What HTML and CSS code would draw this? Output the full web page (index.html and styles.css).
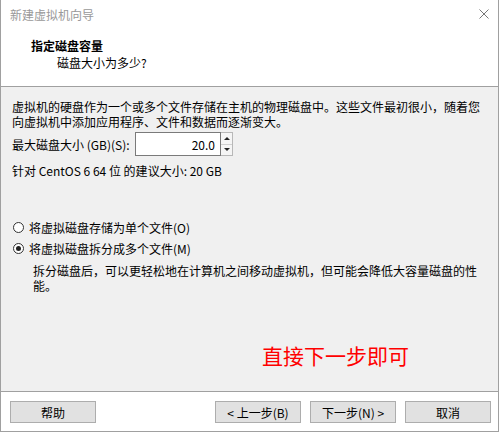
FILE: index.html
```html
<!DOCTYPE html>
<html lang="zh-CN">
<head>
    <meta charset="UTF-8">
    <meta name="viewport" content="width=device-width, initial-scale=1.0">
    <title>新建虚拟机向导</title>
    <link rel="stylesheet" href="styles.css">
</head>
<body>
    <div class="window">
        <div class="titlebar">
            <span>新建虚拟机向导</span>
            <svg class="close" width="10" height="10" viewBox="0 0 10 10">
                <path d="M0.5 0.5 L9.5 9.5 M9.5 0.5 L0.5 9.5" stroke="#777" stroke-width="1" fill="none"/>
            </svg>
        </div>

        <div class="header">
            <div class="header-title">指定磁盘容量</div>
            <div class="header-sub">磁盘大小为多少?</div>
        </div>

        <div class="content">
            <p class="intro">虚拟机的硬盘作为一个或多个文件存储在主机的物理磁盘中。这些文件最初很小，随着您向虚拟机中添加应用程序、文件和数据而逐渐变大。</p>

            <div class="size-row">
                <label for="diskSize">最大磁盘大小 (GB)(S):</label>
                <div class="spin">
                    <input type="text" id="diskSize" value="20.0">
                    <div class="spin-buttons">
                        <span class="spin-up"></span>
                        <span class="spin-down"></span>
                    </div>
                </div>
            </div>

            <p class="hint">针对 CentOS 6 64 位 的建议大小: 20 GB</p>

            <div class="options">
                <label class="radio">
                    <input type="radio" name="split">
                    <span class="dot"></span>
                    将虚拟磁盘存储为单个文件(O)
                </label>
                <label class="radio">
                    <input type="radio" name="split" checked>
                    <span class="dot"></span>
                    将虚拟磁盘拆分成多个文件(M)
                </label>
                <p class="note">拆分磁盘后，可以更轻松地在计算机之间移动虚拟机，但可能会降低大容量磁盘的性能。</p>
            </div>

            <p class="tip">直接下一步即可</p>
        </div>

        <div class="footer">
            <button class="help">帮助</button>
            <button>&lt; 上一步(B)</button>
            <button>下一步(N) &gt;</button>
            <button>取消</button>
        </div>
    </div>
</body>
</html>
```

FILE: styles.css
```css
body {
    margin: 0;
    background: #fff;
    font-family: "Noto Sans CJK SC", sans-serif;
    font-size: 12px;
    color: #000;
}

p {
    margin: 0;
}

.window {
    width: 499px;
    height: 432px;
    box-sizing: border-box;
    border: 1px solid #a0a0a0;
    border-top: none;
    display: flex;
    flex-direction: column;
}

.titlebar {
    height: 28px;
    display: flex;
    align-items: center;
    padding: 0 9px 0 9px;
    color: #999;
}

.titlebar .close {
    margin-left: auto;
}

.header {
    height: 59px;
    box-sizing: border-box;
    border-bottom: 1px solid #a0a0a0;
    padding: 10px 0 0 30px;
    line-height: 16px;
}

.header-title {
    font-weight: bold;
}

.header-sub {
    margin: 1px 0 0 26px;
}

.content {
    flex: 1;
    background: #f0f0f0;
    padding: 12px 12px 0 11px;
}

.intro {
    line-height: 15px;
}

.size-row {
    display: flex;
    align-items: center;
    height: 24px;
    margin-top: 3px;
}

.size-row label {
    width: 123px;
}

.spin {
    display: flex;
    height: 24px;
}

.spin input {
    width: 86px;
    height: 24px;
    box-sizing: border-box;
    border: 1px solid #7a7a7a;
    background: #fff;
    text-align: right;
    padding: 0 5px 0 0;
    font-family: inherit;
    font-size: 12px;
    outline: none;
}

.spin-buttons {
    width: 12px;
    height: 24px;
    box-sizing: border-box;
    border: 1px solid #b8b8b8;
    border-left: none;
    background: #f5f5f5;
    display: flex;
    flex-direction: column;
}

.spin-buttons span {
    flex: 1;
    display: flex;
    align-items: center;
    justify-content: center;
}

.spin-up {
    border-bottom: 1px solid #d0d0d0;
}

.spin-up::after {
    content: "";
    border-left: 3px solid transparent;
    border-right: 3px solid transparent;
    border-bottom: 3px solid #222;
}

.spin-down::after {
    content: "";
    border-left: 3px solid transparent;
    border-right: 3px solid transparent;
    border-top: 3px solid #222;
}

.hint {
    margin-top: 7px;
    line-height: 15px;
}

.options {
    margin-top: 39px;
}

.radio {
    display: flex;
    align-items: center;
    height: 21px;
    padding-left: 1px;
}

.radio input {
    display: none;
}

.radio .dot {
    width: 11px;
    height: 11px;
    box-sizing: border-box;
    border: 1px solid #333;
    border-radius: 50%;
    background: #fff;
    margin-right: 5px;
    display: flex;
    align-items: center;
    justify-content: center;
}

.radio input:checked + .dot::after {
    content: "";
    width: 5px;
    height: 5px;
    border-radius: 50%;
    background: #222;
}

.note {
    margin: 4px 0 0 21px;
    line-height: 15px;
}

.tip {
    margin: 50px 0 0 250px;
    font-size: 21px;
    line-height: 24px;
    color: #ff0000;
}

.footer {
    height: 40px;
    box-sizing: border-box;
    border-top: 1px solid #a0a0a0;
    padding: 9px 7px 0 9px;
    display: flex;
    align-items: flex-start;
    gap: 9px;
}

.footer button {
    width: 86px;
    height: 22px;
    border: 1px solid #adadad;
    background: #e1e1e1;
    font-family: inherit;
    font-size: 12px;
    color: #000;
    padding: 0;
}

.footer .help {
    margin-right: auto;
}
```
